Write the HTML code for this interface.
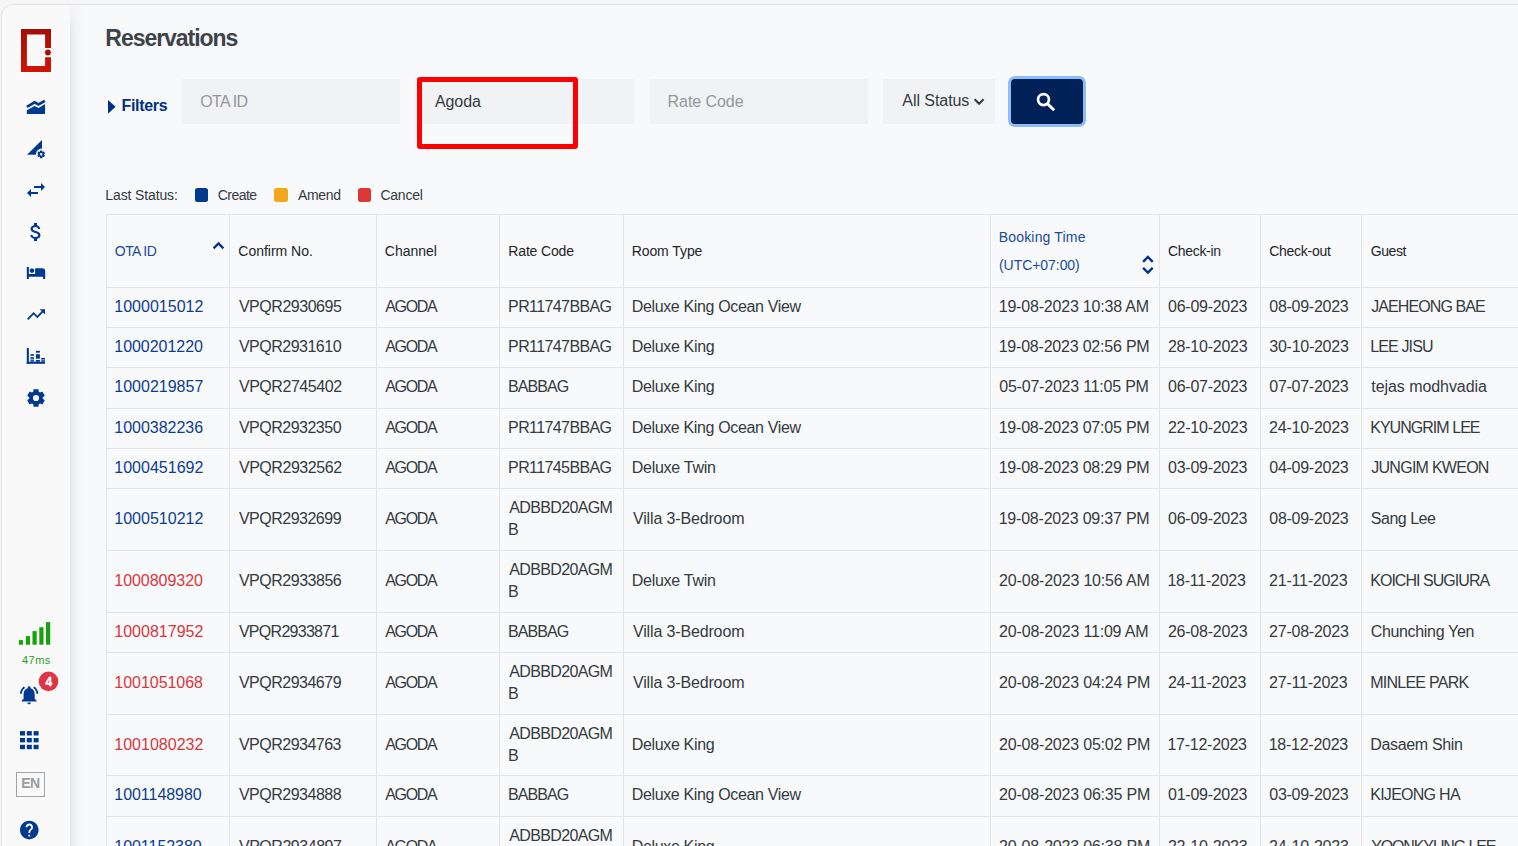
<!DOCTYPE html>
<html><head><meta charset="utf-8"><title>Reservations</title>
<style>
html,body{margin:0;padding:0}
body{width:1518px;height:846px;overflow:hidden;background:#f6f6f6;position:relative;font-family:"Liberation Sans",sans-serif}
.frame{position:absolute;left:1px;top:4px;width:1517px;height:842px;border-top-left-radius:13px;background:#f8f9fa;overflow:hidden;border-left:1px solid #e6e6e6;border-top:1px solid #e6e6e6;box-shadow:0 0 2px rgba(0,0,0,.07)}
.ab{position:absolute;display:block;overflow:visible}
.t{position:absolute;white-space:nowrap}
.side{position:absolute;left:0;top:0;width:70px;height:846px;background:#f9f9f9}
.shadow{position:absolute;left:70px;top:0;width:15px;height:846px;background:linear-gradient(to right,rgba(30,40,60,.085),rgba(30,40,60,.035) 40%,rgba(30,40,60,0));-webkit-mask-image:linear-gradient(to bottom,rgba(0,0,0,.25),#000 28px);mask-image:linear-gradient(to bottom,rgba(0,0,0,.25),#000 28px)}
.inp{position:absolute;top:79px;height:45px;background:#f1f2f4}
.hl{position:absolute;left:106px;width:1412px;height:1px;background:#e3e4e6}
.vl{position:absolute;top:214px;width:1px;height:632px;background:#e3e4e6}
</style></head><body>

<div class="frame"></div>
<div class="side" style="left:2px;top:5px;width:68px;height:841px;border-top-left-radius:12px"></div>
<div class="shadow" style="top:5px;height:841px"></div>
<svg class="ab" style="left:0;top:0" width="70" height="846" viewBox="0 0 70 846">
<defs><linearGradient id="lg" x1="0" y1="0" x2="0" y2="1"><stop offset="0" stop-color="#a30d05"/><stop offset="1" stop-color="#d31407"/></linearGradient></defs>
<rect x="20.2" y="28.2" width="31.6" height="44.6" fill="#fff"/><rect x="26" y="33.8" width="20" height="33.2" fill="#f9f9f9"/><rect x="44" y="47.2" width="8" height="10.8" fill="#f9f9f9"/>
<path d="M21 29H51V48H45.1V34.6H26.9V66.1H45.1V57.2H51V72H21Z" fill="url(#lg)"/>
<circle cx="47.9" cy="52.5" r="2.9" fill="#a80d06"/>

<g fill="#00398f">
<path d="M26.8 110.2L34.6 105.9L38.5 108L45.1 104V113.9H26.8Z"/>
<path d="M26.9 106.8L34.6 102.4L38.5 104.5L44.9 100.8" fill="none" stroke="#00398f" stroke-width="2.7" stroke-linejoin="miter"/>

<path d="M27 154.7L42 140V148.5A6.1 6.1 0 0 0 35.8 154.7Z"/>
<path fill-rule="evenodd" d="M39.95 151.85 L40.03 150.47 L42.37 150.47 L42.45 151.85 L42.70 151.99 L43.93 151.37 L45.10 153.40 L43.95 154.16 L43.95 154.44 L45.10 155.20 L43.93 157.23 L42.70 156.61 L42.45 156.75 L42.37 158.13 L40.03 158.13 L39.95 156.75 L39.70 156.61 L38.47 157.23 L37.30 155.20 L38.45 154.44 L38.45 154.16 L37.30 153.40 L38.47 151.37 L39.70 151.99Z M42.40 154.30 A1.2 1.2 0 1 0 40.00 154.30 A1.2 1.2 0 1 0 42.40 154.30Z"/>
<path transform="translate(24 178)" d="M6.99 11L3 15l3.99 4v-3H14v-2H6.99v-3zM21 9l-3.99-4v3H10v2h7.01v3L21 9z"/>
<path transform="translate(24 220)" d="M11.8 10.9c-2.27-.59-3-1.2-3-2.15 0-1.09 1.01-1.85 2.7-1.850 1.78 0 2.440.85 2.5 2.1h2.21c-.07-1.72-1.12-3.3-3.21-3.81V3h-3v2.16c-1.94.42-3.5 1.68-3.5 3.61 0 2.31 1.91 3.46 4.7 4.13 2.5.6 3 1.48 3 2.41 0 .69-.49 1.79-2.7 1.79-2.06 0-2.87-.92-2.98-2.1h-2.2c.12 2.19 1.76 3.42 3.68 3.83V21h3v-2.15c1.95-.37 3.5-1.5 3.5-3.55 0-2.84-2.43-3.81-4.7-4.4z"/>
<path d="M26.8 267H28.9V274H35.1V268.2H42.2A3 3 0 0 1 45.2 271.2V278.9H43.1V276.7H28.9V278.9H26.8Z"/><rect x="29.7" y="268.4" width="4.5" height="4.4" rx="1.7"/>
<path transform="translate(25.2 303.8) scale(0.9)" d="M16 6l2.29 2.29-4.88 4.88-4-4L2 16.59 3.41 18l6-6 4 4 6.3-6.29L22 12V6z"/>
<rect x="26.8" y="348" width="2.1" height="15.8"/><rect x="26.8" y="361.7" width="18.2" height="2.1"/><rect x="30.4" y="354.2" width="3.6" height="1.6"/><rect x="30.4" y="357.2" width="3.6" height="1.6"/><rect x="30.4" y="359.5" width="3.6" height="2.3" opacity=".8"/><rect x="35.9" y="350.8" width="4" height="1.9"/><rect x="35.9" y="354.2" width="4" height="4.5"/><rect x="35.9" y="360" width="4" height="1.8"/><rect x="41.2" y="358" width="3.8" height="1.1"/><rect x="41.2" y="359.4" width="3.8" height="2.4" opacity=".8"/>
<path fill-rule="evenodd" d="M33.30 391.65 L33.49 389.25 L38.51 389.25 L38.70 391.65 L40.15 392.49 L42.32 391.45 L44.83 395.80 L42.85 397.16 L42.85 398.84 L44.83 400.20 L42.32 404.55 L40.15 403.51 L38.70 404.35 L38.51 406.75 L33.49 406.75 L33.30 404.35 L31.85 403.51 L29.68 404.55 L27.17 400.20 L29.15 398.84 L29.15 397.16 L27.17 395.80 L29.68 391.45 L31.85 392.49Z M39.10 398.00 A3.1 3.1 0 1 0 32.90 398.00 A3.1 3.1 0 1 0 39.10 398.00Z"/>
</g>
<g fill="#17a20d"><rect x="18.9" y="640.1" width="4.2" height="4.6"/><rect x="25.8" y="636.1" width="4.2" height="8.6"/><rect x="32.5" y="631.1" width="4.2" height="13.6"/><rect x="39.3" y="627.2" width="4.2" height="17.5"/><rect x="46" y="622.1" width="4.2" height="22.6"/></g>
<path fill="#00398f" transform="translate(18.1 684) scale(0.92)" d="M7.58 4.08L6.15 2.65C3.75 4.48 2.17 7.3 2.03 10.5h2c.15-2.65 1.51-4.970 3.55-6.42zm12.39 6.42h2c-.15-3.2-1.73-6.02-4.12-7.85l-1.42 1.43c2.02 1.45 3.39 3.77 3.54 6.42zM18 11c0-3.07-1.64-5.64-4.5-6.32V4c0-.83-.67-1.5-1.5-1.5s-1.5.67-1.5 1.5v.68C7.63 5.36 6 7.92 6 11v5l-2 2v1h16v-1l-2-2v-5zm-6 11c.14 0 .27-.01.4-.04.65-.14 1.18-.58 1.440-1.18.1-.24.15-.5.15-.78h-4c.01 1.1.9 2 2.01 2z"/>
<circle cx="48.5" cy="681.4" r="9.8" fill="#dc3545"/>
<g fill="#00398f"><rect x="20.0" y="731.10" width="5" height="4.4"/><rect x="20.0" y="737.95" width="5" height="4.4"/><rect x="20.0" y="744.80" width="5" height="4.4"/><rect x="26.8" y="731.10" width="5" height="4.4"/><rect x="26.8" y="737.95" width="5" height="4.4"/><rect x="26.8" y="744.80" width="5" height="4.4"/><rect x="33.6" y="731.10" width="5" height="4.4"/><rect x="33.6" y="737.95" width="5" height="4.4"/><rect x="33.6" y="744.80" width="5" height="4.4"/></g>
<path fill="#00398f" transform="translate(18.14 818.94) scale(0.93)" d="M12 2C6.48 2 2 6.48 2 12s4.48 10 10 10 10-4.48 10-10S17.52 2 12 2zm1 17h-2v-2h2v2zm2.07-7.75l-.9.92C13.45 12.9 13 13.5 13 15h-2v-.5c0-1.1.45-2.1 1.17-2.830l1.24-1.26c.37-.36.59-.86.59-1.41 0-1.1-.9-2-2-2s-2 .9-2 2H8c0-2.21 1.79-4 4-4s4 1.79 4 4c0 .88-.36 1.68-.93 2.25z"/>
</svg>
<div class="t" style="left:21.95px;top:653px;font-size:11px;line-height:14px;color:#1f9f1f;letter-spacing:0.484px;">47ms</div>
<div class="t" style="left:45.62px;top:675px;font-size:12px;line-height:15px;font-weight:700;color:#fff;letter-spacing:-0.262px;-webkit-text-stroke:0.35px #fff;">4</div>
<div class="ab" style="left:16px;top:772px;width:27px;height:23px;border:1px solid #a3a3a3"></div>
<div class="t" style="left:21.26px;top:774px;font-size:14px;line-height:18px;font-weight:700;color:#9a9c9e;letter-spacing:-0.668px;">EN</div>
<div class="t" style="left:105.36px;top:24px;font-size:23px;line-height:29px;font-weight:700;color:#3d4349;letter-spacing:-1.043px;">Reservations</div>
<svg class="ab" style="left:0;top:0" width="1518" height="220" viewBox="0 0 1518 220">
<path d="M108 100L115.6 106.85L108 113.7Z" fill="#00308a"/>
</svg>
<div class="t" style="left:121.53px;top:96px;font-size:16px;line-height:20px;font-weight:700;color:#003087;letter-spacing:-0.332px;">Filters</div>
<div class="inp" style="left:182px;width:218px"></div>
<div class="inp" style="left:417px;width:217px"></div>
<div class="inp" style="left:650px;width:218px"></div>
<div class="inp" style="left:883px;width:112px"></div>
<div class="t" style="left:200.34px;top:92px;font-size:16px;line-height:20px;color:#94989c;letter-spacing:-0.683px;">OTA ID</div>
<div class="t" style="left:434.97px;top:92px;font-size:16px;line-height:20px;color:#343a40;letter-spacing:-0.084px;">Agoda</div>
<div class="t" style="left:667.59px;top:92px;font-size:16px;line-height:20px;color:#94989c;letter-spacing:-0.059px;">Rate Code</div>
<div class="t" style="left:902.37px;top:91px;font-size:16px;line-height:20px;color:#343a40;letter-spacing:-0.064px;">All Status</div>
<svg class="ab" style="left:0;top:0" width="1518" height="220" viewBox="0 0 1518 220">
<path d="M974.6 99.3L979.1 103.8L983.6 99.3" fill="none" stroke="#343a40" stroke-width="2"/>
</svg>
<div class="ab" style="left:417px;top:77px;width:151px;height:62px;border:5px solid #ff0000;border-radius:3px"></div>
<div class="ab" style="left:1008px;top:76px;width:72px;height:45px;border:3px solid #8cbdfa;border-radius:7px;background:#002157"></div>
<svg class="ab" style="left:0;top:0" width="1518" height="220" viewBox="0 0 1518 220">
<circle cx="1043.5" cy="99.6" r="5.45" fill="none" stroke="#fff" stroke-width="2.7"/><path d="M1047.4 103.6L1054.2 110.3" stroke="#fff" stroke-width="2.9" stroke-linecap="butt"/>
</svg>
<div class="t" style="left:105.35px;top:186px;font-size:14px;line-height:18px;color:#343a40;letter-spacing:-0.128px;">Last Status:</div>
<div class="ab" style="left:195px;top:188px;width:13px;height:13.5px;border-radius:2.5px;background:#003a8c"></div>
<div class="ab" style="left:274px;top:188px;width:13.5px;height:13.5px;border-radius:2.5px;background:#f2a71b"></div>
<div class="ab" style="left:358px;top:188px;width:13px;height:13.5px;border-radius:2.5px;background:#dc3838"></div>
<div class="t" style="left:217.79px;top:186px;font-size:14px;line-height:18px;color:#343a40;letter-spacing:-0.537px;">Create</div>
<div class="t" style="left:297.97px;top:186px;font-size:14px;line-height:18px;color:#343a40;letter-spacing:-0.332px;">Amend</div>
<div class="t" style="left:380.39px;top:186px;font-size:14px;line-height:18px;color:#343a40;letter-spacing:-0.226px;">Cancel</div>
<div class="hl" style="top:214px"></div>
<div class="hl" style="top:287px"></div>
<div class="hl" style="top:327px"></div>
<div class="hl" style="top:367px"></div>
<div class="hl" style="top:408px"></div>
<div class="hl" style="top:448px"></div>
<div class="hl" style="top:488px"></div>
<div class="hl" style="top:550px"></div>
<div class="hl" style="top:612px"></div>
<div class="hl" style="top:652px"></div>
<div class="hl" style="top:714px"></div>
<div class="hl" style="top:775px"></div>
<div class="hl" style="top:816px"></div>
<div class="vl" style="left:106px"></div>
<div class="vl" style="left:229px"></div>
<div class="vl" style="left:376px"></div>
<div class="vl" style="left:499px"></div>
<div class="vl" style="left:623px"></div>
<div class="vl" style="left:990px"></div>
<div class="vl" style="left:1159px"></div>
<div class="vl" style="left:1260px"></div>
<div class="vl" style="left:1361px"></div>
<div class="t" style="left:114.84px;top:242px;font-size:14px;line-height:18px;color:#1a4b9b;letter-spacing:-0.587px;">OTA ID</div>
<div class="t" style="left:238.29px;top:242px;font-size:14px;line-height:18px;color:#212529;letter-spacing:-0.012px;">Confirm No.</div>
<div class="t" style="left:384.79px;top:242px;font-size:14px;line-height:18px;color:#212529;letter-spacing:-0.001px;">Channel</div>
<div class="t" style="left:508.35px;top:242px;font-size:14px;line-height:18px;color:#212529;letter-spacing:-0.170px;">Rate Code</div>
<div class="t" style="left:631.65px;top:242px;font-size:14px;line-height:18px;color:#212529;letter-spacing:-0.073px;">Room Type</div>
<div class="t" style="left:998.75px;top:228px;font-size:14px;line-height:18px;color:#1a4b9b;letter-spacing:0.171px;">Booking Time</div>
<div class="t" style="left:999.03px;top:256px;font-size:14px;line-height:18px;color:#1a4b9b;letter-spacing:-0.057px;">(UTC+07:00)</div>
<div class="t" style="left:1167.99px;top:242px;font-size:14px;line-height:18px;color:#212529;letter-spacing:-0.319px;">Check-in</div>
<div class="t" style="left:1269.19px;top:242px;font-size:14px;line-height:18px;color:#212529;letter-spacing:-0.261px;">Check-out</div>
<div class="t" style="left:1370.80px;top:242px;font-size:14px;line-height:18px;color:#212529;letter-spacing:-0.433px;">Guest</div>
<svg class="ab" style="left:0;top:0" width="1518" height="300" viewBox="0 0 1518 300">
<path d="M213.6 248.4L218.5 243.5L223.4 248.4" fill="none" stroke="#00318c" stroke-width="2.3"/>
<path d="M1143.1 261.8L1147.9 257L1152.7 261.8M1143.1 267.9L1147.9 272.7L1152.7 267.9" fill="none" stroke="#00318c" stroke-width="2.35"/>
</svg>
<div class="t" style="left:114.28px;top:297px;font-size:16px;line-height:20px;color:#0d3d91;letter-spacing:0.017px;">1000015012</div>
<div class="t" style="left:238.93px;top:297px;font-size:16px;line-height:20px;color:#343a40;letter-spacing:-0.469px;">VPQR2930695</div>
<div class="t" style="left:385.27px;top:297px;font-size:16px;line-height:20px;color:#343a40;letter-spacing:-1.351px;">AGODA</div>
<div class="t" style="left:508.09px;top:297px;font-size:16px;line-height:20px;color:#343a40;letter-spacing:-0.601px;">PR11747BBAG</div>
<div class="t" style="left:631.69px;top:297px;font-size:16px;line-height:20px;color:#343a40;letter-spacing:-0.350px;">Deluxe King Ocean View</div>
<div class="t" style="left:998.68px;top:297px;font-size:16px;line-height:20px;color:#343a40;letter-spacing:-0.191px;">19-08-2023 10:38 AM</div>
<div class="t" style="left:1168.08px;top:297px;font-size:16px;line-height:20px;color:#343a40;letter-spacing:-0.273px;">06-09-2023</div>
<div class="t" style="left:1269.28px;top:297px;font-size:16px;line-height:20px;color:#343a40;letter-spacing:-0.273px;">08-09-2023</div>
<div class="t" style="left:1371.25px;top:297px;font-size:16px;line-height:20px;color:#343a40;letter-spacing:-0.908px;">JAEHEONG BAE</div>
<div class="t" style="left:114.28px;top:337px;font-size:16px;line-height:20px;color:#0d3d91;letter-spacing:-0.038px;">1000201220</div>
<div class="t" style="left:238.93px;top:337px;font-size:16px;line-height:20px;color:#343a40;letter-spacing:-0.501px;">VPQR2931610</div>
<div class="t" style="left:385.27px;top:337px;font-size:16px;line-height:20px;color:#343a40;letter-spacing:-1.351px;">AGODA</div>
<div class="t" style="left:508.09px;top:337px;font-size:16px;line-height:20px;color:#343a40;letter-spacing:-0.601px;">PR11747BBAG</div>
<div class="t" style="left:631.69px;top:337px;font-size:16px;line-height:20px;color:#343a40;letter-spacing:-0.332px;">Deluxe King</div>
<div class="t" style="left:998.68px;top:337px;font-size:16px;line-height:20px;color:#343a40;letter-spacing:-0.210px;">19-08-2023 02:56 PM</div>
<div class="t" style="left:1167.90px;top:337px;font-size:16px;line-height:20px;color:#343a40;letter-spacing:-0.235px;">28-10-2023</div>
<div class="t" style="left:1269.29px;top:337px;font-size:16px;line-height:20px;color:#343a40;letter-spacing:-0.258px;">30-10-2023</div>
<div class="t" style="left:1370.19px;top:337px;font-size:16px;line-height:20px;color:#343a40;letter-spacing:-0.852px;">LEE JISU</div>
<div class="t" style="left:114.28px;top:377px;font-size:16px;line-height:20px;color:#0d3d91;letter-spacing:0.006px;">1000219857</div>
<div class="t" style="left:238.93px;top:377px;font-size:16px;line-height:20px;color:#343a40;letter-spacing:-0.452px;">VPQR2745402</div>
<div class="t" style="left:385.27px;top:377px;font-size:16px;line-height:20px;color:#343a40;letter-spacing:-1.351px;">AGODA</div>
<div class="t" style="left:508.09px;top:377px;font-size:16px;line-height:20px;color:#343a40;letter-spacing:-0.940px;">BABBAG</div>
<div class="t" style="left:631.69px;top:377px;font-size:16px;line-height:20px;color:#343a40;letter-spacing:-0.332px;">Deluxe King</div>
<div class="t" style="left:999.27px;top:377px;font-size:16px;line-height:20px;color:#343a40;letter-spacing:-0.219px;">05-07-2023 11:05 PM</div>
<div class="t" style="left:1168.08px;top:377px;font-size:16px;line-height:20px;color:#343a40;letter-spacing:-0.273px;">06-07-2023</div>
<div class="t" style="left:1269.28px;top:377px;font-size:16px;line-height:20px;color:#343a40;letter-spacing:-0.273px;">07-07-2023</div>
<div class="t" style="left:1371.26px;top:377px;font-size:16px;line-height:20px;color:#343a40;letter-spacing:-0.060px;">tejas modhvadia</div>
<div class="t" style="left:114.28px;top:418px;font-size:16px;line-height:20px;color:#0d3d91;letter-spacing:-0.013px;">1000382236</div>
<div class="t" style="left:238.93px;top:418px;font-size:16px;line-height:20px;color:#343a40;letter-spacing:-0.501px;">VPQR2932350</div>
<div class="t" style="left:385.27px;top:418px;font-size:16px;line-height:20px;color:#343a40;letter-spacing:-1.351px;">AGODA</div>
<div class="t" style="left:508.09px;top:418px;font-size:16px;line-height:20px;color:#343a40;letter-spacing:-0.601px;">PR11747BBAG</div>
<div class="t" style="left:631.69px;top:418px;font-size:16px;line-height:20px;color:#343a40;letter-spacing:-0.350px;">Deluxe King Ocean View</div>
<div class="t" style="left:998.68px;top:418px;font-size:16px;line-height:20px;color:#343a40;letter-spacing:-0.210px;">19-08-2023 07:05 PM</div>
<div class="t" style="left:1167.90px;top:418px;font-size:16px;line-height:20px;color:#343a40;letter-spacing:-0.235px;">22-10-2023</div>
<div class="t" style="left:1269.10px;top:418px;font-size:16px;line-height:20px;color:#343a40;letter-spacing:-0.235px;">24-10-2023</div>
<div class="t" style="left:1370.19px;top:418px;font-size:16px;line-height:20px;color:#343a40;letter-spacing:-0.962px;">KYUNGRIM LEE</div>
<div class="t" style="left:114.28px;top:458px;font-size:16px;line-height:20px;color:#0d3d91;letter-spacing:0.017px;">1000451692</div>
<div class="t" style="left:238.93px;top:458px;font-size:16px;line-height:20px;color:#343a40;letter-spacing:-0.452px;">VPQR2932562</div>
<div class="t" style="left:385.27px;top:458px;font-size:16px;line-height:20px;color:#343a40;letter-spacing:-1.351px;">AGODA</div>
<div class="t" style="left:508.09px;top:458px;font-size:16px;line-height:20px;color:#343a40;letter-spacing:-0.601px;">PR11745BBAG</div>
<div class="t" style="left:631.69px;top:458px;font-size:16px;line-height:20px;color:#343a40;letter-spacing:-0.254px;">Deluxe Twin</div>
<div class="t" style="left:998.68px;top:458px;font-size:16px;line-height:20px;color:#343a40;letter-spacing:-0.210px;">19-08-2023 08:29 PM</div>
<div class="t" style="left:1168.08px;top:458px;font-size:16px;line-height:20px;color:#343a40;letter-spacing:-0.273px;">03-09-2023</div>
<div class="t" style="left:1269.28px;top:458px;font-size:16px;line-height:20px;color:#343a40;letter-spacing:-0.273px;">04-09-2023</div>
<div class="t" style="left:1371.25px;top:458px;font-size:16px;line-height:20px;color:#343a40;letter-spacing:-0.731px;">JUNGIM KWEON</div>
<div class="t" style="left:114.28px;top:509px;font-size:16px;line-height:20px;color:#0d3d91;letter-spacing:0.017px;">1000510212</div>
<div class="t" style="left:238.93px;top:509px;font-size:16px;line-height:20px;color:#343a40;letter-spacing:-0.502px;">VPQR2932699</div>
<div class="t" style="left:385.27px;top:509px;font-size:16px;line-height:20px;color:#343a40;letter-spacing:-1.351px;">AGODA</div>
<div class="t" style="left:509.37px;top:498px;font-size:16px;line-height:20px;color:#343a40;letter-spacing:-0.661px;">ADBBD20AGM</div>
<div class="t" style="left:508.09px;top:520px;font-size:16px;line-height:20px;color:#343a40;letter-spacing:-0.851px;">B</div>
<div class="t" style="left:632.93px;top:509px;font-size:16px;line-height:20px;color:#343a40;letter-spacing:-0.143px;">Villa 3-Bedroom</div>
<div class="t" style="left:998.68px;top:509px;font-size:16px;line-height:20px;color:#343a40;letter-spacing:-0.210px;">19-08-2023 09:37 PM</div>
<div class="t" style="left:1168.08px;top:509px;font-size:16px;line-height:20px;color:#343a40;letter-spacing:-0.273px;">06-09-2023</div>
<div class="t" style="left:1269.28px;top:509px;font-size:16px;line-height:20px;color:#343a40;letter-spacing:-0.273px;">08-09-2023</div>
<div class="t" style="left:1370.77px;top:509px;font-size:16px;line-height:20px;color:#343a40;letter-spacing:-0.479px;">Sang Lee</div>
<div class="t" style="left:114.28px;top:571px;font-size:16px;line-height:20px;color:#d9363e;letter-spacing:-0.038px;">1000809320</div>
<div class="t" style="left:238.93px;top:571px;font-size:16px;line-height:20px;color:#343a40;letter-spacing:-0.479px;">VPQR2933856</div>
<div class="t" style="left:385.27px;top:571px;font-size:16px;line-height:20px;color:#343a40;letter-spacing:-1.351px;">AGODA</div>
<div class="t" style="left:509.37px;top:560px;font-size:16px;line-height:20px;color:#343a40;letter-spacing:-0.661px;">ADBBD20AGM</div>
<div class="t" style="left:508.09px;top:582px;font-size:16px;line-height:20px;color:#343a40;letter-spacing:-0.851px;">B</div>
<div class="t" style="left:631.69px;top:571px;font-size:16px;line-height:20px;color:#343a40;letter-spacing:-0.254px;">Deluxe Twin</div>
<div class="t" style="left:999.10px;top:571px;font-size:16px;line-height:20px;color:#343a40;letter-spacing:-0.181px;">20-08-2023 10:56 AM</div>
<div class="t" style="left:1167.48px;top:571px;font-size:16px;line-height:20px;color:#343a40;letter-spacing:-0.256px;">18-11-2023</div>
<div class="t" style="left:1269.10px;top:571px;font-size:16px;line-height:20px;color:#343a40;letter-spacing:-0.235px;">21-11-2023</div>
<div class="t" style="left:1370.19px;top:571px;font-size:16px;line-height:20px;color:#343a40;letter-spacing:-0.961px;">KOICHI SUGIURA</div>
<div class="t" style="left:114.28px;top:622px;font-size:16px;line-height:20px;color:#d9363e;letter-spacing:0.017px;">1000817952</div>
<div class="t" style="left:238.93px;top:622px;font-size:16px;line-height:20px;color:#343a40;letter-spacing:-0.722px;">VPQR2933871</div>
<div class="t" style="left:385.27px;top:622px;font-size:16px;line-height:20px;color:#343a40;letter-spacing:-1.351px;">AGODA</div>
<div class="t" style="left:508.09px;top:622px;font-size:16px;line-height:20px;color:#343a40;letter-spacing:-0.940px;">BABBAG</div>
<div class="t" style="left:632.93px;top:622px;font-size:16px;line-height:20px;color:#343a40;letter-spacing:-0.143px;">Villa 3-Bedroom</div>
<div class="t" style="left:999.10px;top:622px;font-size:16px;line-height:20px;color:#343a40;letter-spacing:-0.181px;">20-08-2023 11:09 AM</div>
<div class="t" style="left:1167.90px;top:622px;font-size:16px;line-height:20px;color:#343a40;letter-spacing:-0.235px;">26-08-2023</div>
<div class="t" style="left:1269.10px;top:622px;font-size:16px;line-height:20px;color:#343a40;letter-spacing:-0.235px;">27-08-2023</div>
<div class="t" style="left:1370.69px;top:622px;font-size:16px;line-height:20px;color:#343a40;letter-spacing:-0.329px;">Chunching Yen</div>
<div class="t" style="left:114.28px;top:673px;font-size:16px;line-height:20px;color:#d9363e;letter-spacing:-0.026px;">1001051068</div>
<div class="t" style="left:238.93px;top:673px;font-size:16px;line-height:20px;color:#343a40;letter-spacing:-0.502px;">VPQR2934679</div>
<div class="t" style="left:385.27px;top:673px;font-size:16px;line-height:20px;color:#343a40;letter-spacing:-1.351px;">AGODA</div>
<div class="t" style="left:509.37px;top:662px;font-size:16px;line-height:20px;color:#343a40;letter-spacing:-0.661px;">ADBBD20AGM</div>
<div class="t" style="left:508.09px;top:684px;font-size:16px;line-height:20px;color:#343a40;letter-spacing:-0.851px;">B</div>
<div class="t" style="left:632.93px;top:673px;font-size:16px;line-height:20px;color:#343a40;letter-spacing:-0.143px;">Villa 3-Bedroom</div>
<div class="t" style="left:999.10px;top:673px;font-size:16px;line-height:20px;color:#343a40;letter-spacing:-0.200px;">20-08-2023 04:24 PM</div>
<div class="t" style="left:1167.90px;top:673px;font-size:16px;line-height:20px;color:#343a40;letter-spacing:-0.235px;">24-11-2023</div>
<div class="t" style="left:1269.10px;top:673px;font-size:16px;line-height:20px;color:#343a40;letter-spacing:-0.235px;">27-11-2023</div>
<div class="t" style="left:1370.19px;top:673px;font-size:16px;line-height:20px;color:#343a40;letter-spacing:-0.747px;">MINLEE PARK</div>
<div class="t" style="left:114.28px;top:735px;font-size:16px;line-height:20px;color:#d9363e;letter-spacing:0.017px;">1001080232</div>
<div class="t" style="left:238.93px;top:735px;font-size:16px;line-height:20px;color:#343a40;letter-spacing:-0.506px;">VPQR2934763</div>
<div class="t" style="left:385.27px;top:735px;font-size:16px;line-height:20px;color:#343a40;letter-spacing:-1.351px;">AGODA</div>
<div class="t" style="left:509.37px;top:724px;font-size:16px;line-height:20px;color:#343a40;letter-spacing:-0.661px;">ADBBD20AGM</div>
<div class="t" style="left:508.09px;top:746px;font-size:16px;line-height:20px;color:#343a40;letter-spacing:-0.851px;">B</div>
<div class="t" style="left:631.69px;top:735px;font-size:16px;line-height:20px;color:#343a40;letter-spacing:-0.332px;">Deluxe King</div>
<div class="t" style="left:999.10px;top:735px;font-size:16px;line-height:20px;color:#343a40;letter-spacing:-0.200px;">20-08-2023 05:02 PM</div>
<div class="t" style="left:1167.48px;top:735px;font-size:16px;line-height:20px;color:#343a40;letter-spacing:-0.256px;">17-12-2023</div>
<div class="t" style="left:1268.68px;top:735px;font-size:16px;line-height:20px;color:#343a40;letter-spacing:-0.256px;">18-12-2023</div>
<div class="t" style="left:1370.19px;top:735px;font-size:16px;line-height:20px;color:#343a40;letter-spacing:-0.333px;">Dasaem Shin</div>
<div class="t" style="left:114.28px;top:785px;font-size:16px;line-height:20px;color:#0d3d91;letter-spacing:-0.038px;">1001148980</div>
<div class="t" style="left:238.93px;top:785px;font-size:16px;line-height:20px;color:#343a40;letter-spacing:-0.490px;">VPQR2934888</div>
<div class="t" style="left:385.27px;top:785px;font-size:16px;line-height:20px;color:#343a40;letter-spacing:-1.351px;">AGODA</div>
<div class="t" style="left:508.09px;top:785px;font-size:16px;line-height:20px;color:#343a40;letter-spacing:-0.940px;">BABBAG</div>
<div class="t" style="left:631.69px;top:785px;font-size:16px;line-height:20px;color:#343a40;letter-spacing:-0.350px;">Deluxe King Ocean View</div>
<div class="t" style="left:999.10px;top:785px;font-size:16px;line-height:20px;color:#343a40;letter-spacing:-0.200px;">20-08-2023 06:35 PM</div>
<div class="t" style="left:1168.08px;top:785px;font-size:16px;line-height:20px;color:#343a40;letter-spacing:-0.273px;">01-09-2023</div>
<div class="t" style="left:1269.28px;top:785px;font-size:16px;line-height:20px;color:#343a40;letter-spacing:-0.273px;">03-09-2023</div>
<div class="t" style="left:1370.19px;top:785px;font-size:16px;line-height:20px;color:#343a40;letter-spacing:-0.726px;">KIJEONG HA</div>
<div class="t" style="left:114.28px;top:837px;font-size:16px;line-height:20px;color:#0d3d91;letter-spacing:-0.038px;">1001152380</div>
<div class="t" style="left:238.93px;top:837px;font-size:16px;line-height:20px;color:#343a40;letter-spacing:-0.462px;">VPQR2934897</div>
<div class="t" style="left:385.27px;top:837px;font-size:16px;line-height:20px;color:#343a40;letter-spacing:-1.351px;">AGODA</div>
<div class="t" style="left:509.37px;top:826px;font-size:16px;line-height:20px;color:#343a40;letter-spacing:-0.661px;">ADBBD20AGM</div>
<div class="t" style="left:508.09px;top:848px;font-size:16px;line-height:20px;color:#343a40;letter-spacing:-0.851px;">B</div>
<div class="t" style="left:631.69px;top:837px;font-size:16px;line-height:20px;color:#343a40;letter-spacing:-0.332px;">Deluxe King</div>
<div class="t" style="left:999.10px;top:837px;font-size:16px;line-height:20px;color:#343a40;letter-spacing:-0.200px;">20-08-2023 06:38 PM</div>
<div class="t" style="left:1167.90px;top:837px;font-size:16px;line-height:20px;color:#343a40;letter-spacing:-0.235px;">22-10-2023</div>
<div class="t" style="left:1269.10px;top:837px;font-size:16px;line-height:20px;color:#343a40;letter-spacing:-0.235px;">24-10-2023</div>
<div class="t" style="left:1371.15px;top:837px;font-size:16px;line-height:20px;color:#343a40;letter-spacing:-1.120px;">YOONKYUNG LEE</div>
</body></html>
